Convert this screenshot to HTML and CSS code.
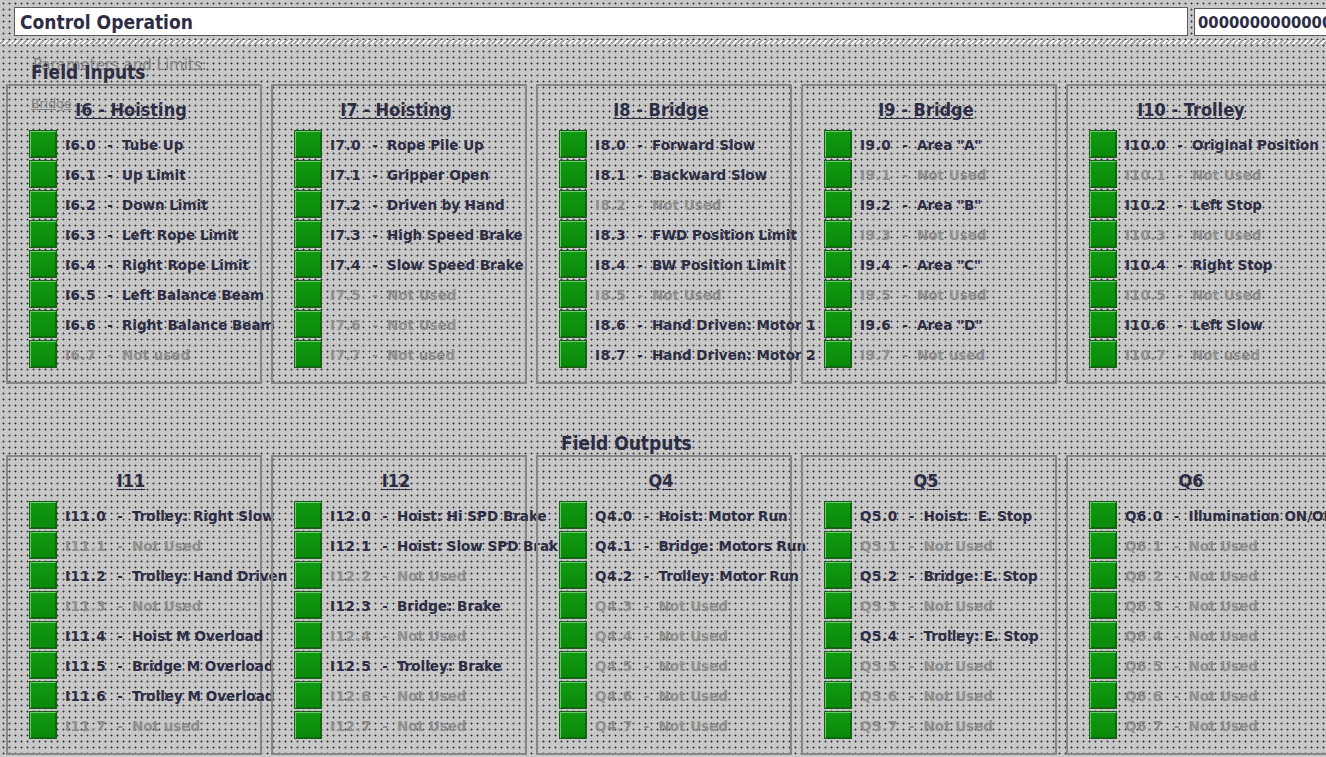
FILE: index.html
```html
<!DOCTYPE html>
<html>
<head>
<meta charset="utf-8">
<link rel="stylesheet" href="styles.css">
</head>
<body>
<div class="screen">
  <div class="topbar">
    <div class="title-box">Control Operation</div>
    <div class="num-box">0000000000000</div>
  </div>
  <div class="stripe"></div>

  <section class="group">
    <div class="ghost ghost-params">Parameters and Limits:</div>
    <div class="ghost ghost-bridge">Bridge</div>
    <h2 class="group-title inputs-title">Field Inputs</h2>
    <div class="panels">
      <div class="panel">
        <div class="panel-title">I6 - Hoisting</div>
        <ul class="rows">
          <li class="row"><span class="led"></span><span class="txt"><span class="code">I6.0</span><span class="dash">-</span>Tube Up</span></li>
          <li class="row"><span class="led"></span><span class="txt"><span class="code">I6.1</span><span class="dash">-</span>Up Limit</span></li>
          <li class="row"><span class="led"></span><span class="txt"><span class="code">I6.2</span><span class="dash">-</span>Down Limit</span></li>
          <li class="row"><span class="led"></span><span class="txt"><span class="code">I6.3</span><span class="dash">-</span>Left Rope Limit</span></li>
          <li class="row"><span class="led"></span><span class="txt"><span class="code">I6.4</span><span class="dash">-</span>Right Rope Limit</span></li>
          <li class="row"><span class="led"></span><span class="txt"><span class="code">I6.5</span><span class="dash">-</span>Left Balance Beam</span></li>
          <li class="row"><span class="led"></span><span class="txt"><span class="code">I6.6</span><span class="dash">-</span>Right Balance Beam</span></li>
          <li class="row off"><span class="led"></span><span class="txt"><span class="code">I6.7</span><span class="dash">-</span>Not used</span></li>
        </ul>
      </div>
      <div class="panel">
        <div class="panel-title">I7 - Hoisting</div>
        <ul class="rows">
          <li class="row"><span class="led"></span><span class="txt"><span class="code">I7.0</span><span class="dash">-</span>Rope Pile Up</span></li>
          <li class="row"><span class="led"></span><span class="txt"><span class="code">I7.1</span><span class="dash">-</span>Gripper Open</span></li>
          <li class="row"><span class="led"></span><span class="txt"><span class="code">I7.2</span><span class="dash">-</span>Driven by Hand</span></li>
          <li class="row"><span class="led"></span><span class="txt"><span class="code">I7.3</span><span class="dash">-</span>High Speed Brake</span></li>
          <li class="row"><span class="led"></span><span class="txt"><span class="code">I7.4</span><span class="dash">-</span>Slow Speed Brake</span></li>
          <li class="row off"><span class="led"></span><span class="txt"><span class="code">I7.5</span><span class="dash">-</span>Not Used</span></li>
          <li class="row off"><span class="led"></span><span class="txt"><span class="code">I7.6</span><span class="dash">-</span>Not Used</span></li>
          <li class="row off"><span class="led"></span><span class="txt"><span class="code">I7.7</span><span class="dash">-</span>Not used</span></li>
        </ul>
      </div>
      <div class="panel">
        <div class="panel-title">I8 - Bridge</div>
        <ul class="rows">
          <li class="row"><span class="led"></span><span class="txt"><span class="code">I8.0</span><span class="dash">-</span>Forward Slow</span></li>
          <li class="row"><span class="led"></span><span class="txt"><span class="code">I8.1</span><span class="dash">-</span>Backward Slow</span></li>
          <li class="row off"><span class="led"></span><span class="txt"><span class="code">I8.2</span><span class="dash">-</span>Not Used</span></li>
          <li class="row"><span class="led"></span><span class="txt"><span class="code">I8.3</span><span class="dash">-</span>FWD Position Limit</span></li>
          <li class="row"><span class="led"></span><span class="txt"><span class="code">I8.4</span><span class="dash">-</span>BW Position Limit</span></li>
          <li class="row off"><span class="led"></span><span class="txt"><span class="code">I8.5</span><span class="dash">-</span>Not Used</span></li>
          <li class="row"><span class="led"></span><span class="txt"><span class="code">I8.6</span><span class="dash">-</span>Hand Driven: Motor 1</span></li>
          <li class="row"><span class="led"></span><span class="txt"><span class="code">I8.7</span><span class="dash">-</span>Hand Driven: Motor 2</span></li>
        </ul>
      </div>
      <div class="panel">
        <div class="panel-title">I9 - Bridge</div>
        <ul class="rows">
          <li class="row"><span class="led"></span><span class="txt"><span class="code">I9.0</span><span class="dash">-</span>Area "A"</span></li>
          <li class="row off"><span class="led"></span><span class="txt"><span class="code">I9.1</span><span class="dash">-</span>Not Used</span></li>
          <li class="row"><span class="led"></span><span class="txt"><span class="code">I9.2</span><span class="dash">-</span>Area "B"</span></li>
          <li class="row off"><span class="led"></span><span class="txt"><span class="code">I9.3</span><span class="dash">-</span>Not Used</span></li>
          <li class="row"><span class="led"></span><span class="txt"><span class="code">I9.4</span><span class="dash">-</span>Area "C"</span></li>
          <li class="row off"><span class="led"></span><span class="txt"><span class="code">I9.5</span><span class="dash">-</span>Not Used</span></li>
          <li class="row"><span class="led"></span><span class="txt"><span class="code">I9.6</span><span class="dash">-</span>Area "D"</span></li>
          <li class="row off"><span class="led"></span><span class="txt"><span class="code">I9.7</span><span class="dash">-</span>Not used</span></li>
        </ul>
      </div>
      <div class="panel panel-last">
        <div class="panel-title">I10 - Trolley</div>
        <ul class="rows">
          <li class="row"><span class="led"></span><span class="txt"><span class="code">I10.0</span><span class="dash">-</span>Original Position</span></li>
          <li class="row off"><span class="led"></span><span class="txt"><span class="code">I10.1</span><span class="dash">-</span>Not Used</span></li>
          <li class="row"><span class="led"></span><span class="txt"><span class="code">I10.2</span><span class="dash">-</span>Left Stop</span></li>
          <li class="row off"><span class="led"></span><span class="txt"><span class="code">I10.3</span><span class="dash">-</span>Not Used</span></li>
          <li class="row"><span class="led"></span><span class="txt"><span class="code">I10.4</span><span class="dash">-</span>Right Stop</span></li>
          <li class="row off"><span class="led"></span><span class="txt"><span class="code">I10.5</span><span class="dash">-</span>Not Used</span></li>
          <li class="row"><span class="led"></span><span class="txt"><span class="code">I10.6</span><span class="dash">-</span>Left Slow</span></li>
          <li class="row off"><span class="led"></span><span class="txt"><span class="code">I10.7</span><span class="dash">-</span>Not used</span></li>
        </ul>
      </div>
    </div>
  </section>

  <section class="group">
    <h2 class="group-title outputs-title">Field Outputs</h2>
    <div class="panels">
      <div class="panel">
        <div class="panel-title">I11</div>
        <ul class="rows">
          <li class="row"><span class="led"></span><span class="txt"><span class="code">I11.0</span><span class="dash">-</span>Trolley: Right Slow</span></li>
          <li class="row off"><span class="led"></span><span class="txt"><span class="code">I11.1</span><span class="dash">-</span>Not Used</span></li>
          <li class="row"><span class="led"></span><span class="txt"><span class="code">I11.2</span><span class="dash">-</span>Trolley: Hand Driven</span></li>
          <li class="row off"><span class="led"></span><span class="txt"><span class="code">I11.3</span><span class="dash">-</span>Not Used</span></li>
          <li class="row"><span class="led"></span><span class="txt"><span class="code">I11.4</span><span class="dash">-</span>Hoist M Overload</span></li>
          <li class="row"><span class="led"></span><span class="txt"><span class="code">I11.5</span><span class="dash">-</span>Bridge M Overload</span></li>
          <li class="row"><span class="led"></span><span class="txt"><span class="code">I11.6</span><span class="dash">-</span>Trolley M Overload</span></li>
          <li class="row off"><span class="led"></span><span class="txt"><span class="code">I11.7</span><span class="dash">-</span>Not used</span></li>
        </ul>
      </div>
      <div class="panel">
        <div class="panel-title">I12</div>
        <ul class="rows">
          <li class="row"><span class="led"></span><span class="txt"><span class="code">I12.0</span><span class="dash">-</span>Hoist: Hi SPD Brake</span></li>
          <li class="row"><span class="led"></span><span class="txt"><span class="code">I12.1</span><span class="dash">-</span>Hoist: Slow SPD Brake</span></li>
          <li class="row off"><span class="led"></span><span class="txt"><span class="code">I12.2</span><span class="dash">-</span>Not Used</span></li>
          <li class="row"><span class="led"></span><span class="txt"><span class="code">I12.3</span><span class="dash">-</span>Bridge: Brake</span></li>
          <li class="row off"><span class="led"></span><span class="txt"><span class="code">I12.4</span><span class="dash">-</span>Not Used</span></li>
          <li class="row"><span class="led"></span><span class="txt"><span class="code">I12.5</span><span class="dash">-</span>Trolley: Brake</span></li>
          <li class="row off"><span class="led"></span><span class="txt"><span class="code">I12.6</span><span class="dash">-</span>Not Used</span></li>
          <li class="row off"><span class="led"></span><span class="txt"><span class="code">I12.7</span><span class="dash">-</span>Not Used</span></li>
        </ul>
      </div>
      <div class="panel">
        <div class="panel-title">Q4</div>
        <ul class="rows">
          <li class="row"><span class="led"></span><span class="txt"><span class="code">Q4.0</span><span class="dash">-</span>Hoist: Motor Run</span></li>
          <li class="row"><span class="led"></span><span class="txt"><span class="code">Q4.1</span><span class="dash">-</span>Bridge: Motors Run</span></li>
          <li class="row"><span class="led"></span><span class="txt"><span class="code">Q4.2</span><span class="dash">-</span>Trolley: Motor Run</span></li>
          <li class="row off"><span class="led"></span><span class="txt"><span class="code">Q4.3</span><span class="dash">-</span>Not Used</span></li>
          <li class="row off"><span class="led"></span><span class="txt"><span class="code">Q4.4</span><span class="dash">-</span>Not Used</span></li>
          <li class="row off"><span class="led"></span><span class="txt"><span class="code">Q4.5</span><span class="dash">-</span>Not Used</span></li>
          <li class="row off"><span class="led"></span><span class="txt"><span class="code">Q4.6</span><span class="dash">-</span>Not Used</span></li>
          <li class="row off"><span class="led"></span><span class="txt"><span class="code">Q4.7</span><span class="dash">-</span>Not Used</span></li>
        </ul>
      </div>
      <div class="panel">
        <div class="panel-title">Q5</div>
        <ul class="rows">
          <li class="row"><span class="led"></span><span class="txt"><span class="code">Q5.0</span><span class="dash">-</span>Hoist:&nbsp; E. Stop</span></li>
          <li class="row off"><span class="led"></span><span class="txt"><span class="code">Q5.1</span><span class="dash">-</span>Not Used</span></li>
          <li class="row"><span class="led"></span><span class="txt"><span class="code">Q5.2</span><span class="dash">-</span>Bridge: E. Stop</span></li>
          <li class="row off"><span class="led"></span><span class="txt"><span class="code">Q5.3</span><span class="dash">-</span>Not Used</span></li>
          <li class="row"><span class="led"></span><span class="txt"><span class="code">Q5.4</span><span class="dash">-</span>Trolley: E. Stop</span></li>
          <li class="row off"><span class="led"></span><span class="txt"><span class="code">Q5.5</span><span class="dash">-</span>Not Used</span></li>
          <li class="row off"><span class="led"></span><span class="txt"><span class="code">Q5.6</span><span class="dash">-</span>Not Used</span></li>
          <li class="row off"><span class="led"></span><span class="txt"><span class="code">Q5.7</span><span class="dash">-</span>Not Used</span></li>
        </ul>
      </div>
      <div class="panel panel-last">
        <div class="panel-title">Q6</div>
        <ul class="rows">
          <li class="row"><span class="led"></span><span class="txt"><span class="code">Q6.0</span><span class="dash">-</span>Illumination ON/OFF</span></li>
          <li class="row off"><span class="led"></span><span class="txt"><span class="code">Q6.1</span><span class="dash">-</span>Not Used</span></li>
          <li class="row off"><span class="led"></span><span class="txt"><span class="code">Q6.2</span><span class="dash">-</span>Not Used</span></li>
          <li class="row off"><span class="led"></span><span class="txt"><span class="code">Q6.3</span><span class="dash">-</span>Not Used</span></li>
          <li class="row off"><span class="led"></span><span class="txt"><span class="code">Q6.4</span><span class="dash">-</span>Not Used</span></li>
          <li class="row off"><span class="led"></span><span class="txt"><span class="code">Q6.5</span><span class="dash">-</span>Not Used</span></li>
          <li class="row off"><span class="led"></span><span class="txt"><span class="code">Q6.6</span><span class="dash">-</span>Not Used</span></li>
          <li class="row off"><span class="led"></span><span class="txt"><span class="code">Q6.7</span><span class="dash">-</span>Not Used</span></li>
        </ul>
      </div>
    </div>
  </section>
</div>
</body>
</html>
```

FILE: styles.css
```css
html, body {
  margin: 0;
  padding: 0;
}
body {
  width: 1326px;
  height: 757px;
  overflow: hidden;
  background-color: #c8c8c8;
  background-image: radial-gradient(circle at 3.5px 3.5px, #333333 0.9px, rgba(0,0,0,0) 1.1px);
  background-size: 6px 6px;
  font-family: "DejaVu Sans", sans-serif;
  color: #2c2c44;
}
.screen {
  width: 1326px;
  height: 757px;
  overflow: hidden;
}
.topbar {
  display: flex;
  align-items: flex-start;
  gap: 6px;
  padding: 7px 0 0 14px;
  height: 29px;
}
.title-box {
  flex: none;
  width: 1174px;
  height: 29px;
  box-sizing: border-box;
  background: #fff;
  border: 1px solid #5a5a5a;
  font-family: "DejaVu Sans Condensed", "DejaVu Sans", sans-serif;
  font-weight: bold;
  font-size: 19px;
  line-height: 29px;
  padding-left: 5px;
}
.num-box {
  flex: none;
  width: 140px;
  height: 28px;
  margin-top: 1px;
  box-sizing: border-box;
  background: #fff;
  border: 1px solid #5a5a5a;
  font-family: "DejaVu Sans Condensed", "DejaVu Sans", sans-serif;
  font-weight: bold;
  font-size: 16.5px;
  line-height: 27px;
  padding-left: 3px;
  overflow: hidden;
  white-space: nowrap;
}
.stripe {
  margin-top: 4px;
  height: 4px;
  background: repeating-linear-gradient(135deg, #f4f4f4 0 2px, #a8a8a8 2px 4px);
}
.group {
  position: relative;
}
.ghost {
  position: absolute;
  color: #808080;
  white-space: nowrap;
}
.ghost-params {
  left: 33px;
  top: 12px;
  font-size: 15px;
}
.ghost-bridge {
  left: 31px;
  top: 52px;
  font-size: 12.5px;
  text-decoration: underline;
}
.group-title {
  margin: 0;
  font-family: "DejaVu Sans Condensed", "DejaVu Sans", sans-serif;
  font-weight: bold;
  font-size: 19px;
  display: flex;
  align-items: flex-end;
  white-space: nowrap;
}
.inputs-title {
  position: relative;
  height: 40px;
  padding-left: 31px;
  line-height: 22px;
  padding-bottom: 1px;
  box-sizing: border-box;
}
.outputs-title {
  height: 71px;
  padding-left: 561px;
  line-height: 22px;
  padding-bottom: 1px;
  box-sizing: border-box;
}
.panels {
  display: flex;
  gap: 9px;
  padding-left: 6px;
  height: 300px;
}
.panel {
  flex: none;
  width: 256px;
  height: 300px;
  box-sizing: border-box;
  border: 2px solid #868686;
}
.panel-last {
  width: 275px;
}
.panel-title {
  font-family: "DejaVu Sans Condensed", "DejaVu Sans", sans-serif;
  width: 246px;
  text-align: center;
  font-weight: bold;
  font-size: 18px;
  line-height: 22px;
  padding-top: 13px;
  text-decoration: underline;
  text-underline-offset: 2px;
  white-space: nowrap;
}
.rows {
  list-style: none;
  margin: 8px 0 0 0;
  padding: 0 0 0 21px;
}
.row {
  display: flex;
  align-items: center;
  height: 30px;
  font-weight: bold;
  font-size: 13.5px;
  white-space: nowrap;
}
.led {
  flex: none;
  width: 28px;
  height: 28px;
  box-sizing: border-box;
  border: 1px solid #1f5a1f;
  background: linear-gradient(#119a11, #0a8a0a);
  box-shadow: inset 1px 1px 0 #6acb6a, inset -1px -1px 0 #0b6b0b;
}
.txt {
  flex: none;
  display: block;
  margin-left: 8px;
  width: 228px;
  overflow: hidden;
  line-height: 18px;
  padding-top: 1px;
}
.code {
  letter-spacing: 0.6px;
}
.dash {
  margin: 0 9px 0 11px;
}
.row.off .txt {
  color: #8d8d8d;
}
```
